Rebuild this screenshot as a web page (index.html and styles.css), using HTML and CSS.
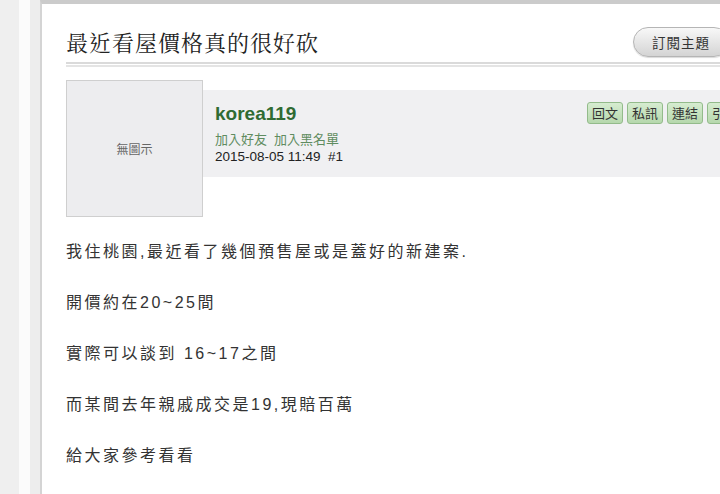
FILE: index.html
```html
<!DOCTYPE html>
<html lang="zh-Hant">
<head>
<meta charset="utf-8">
<title>最近看屋價格真的很好砍</title>
<link rel="stylesheet" href="styles.css">
</head>
<body>
<div class="page">
  <div class="rail rail-a"></div>
  <div class="rail rail-b"></div>
  <div class="rail rail-c"></div>
  <main class="thread">
    <header class="thread-head">
      <h1 class="thread-title">最近看屋價格真的很好砍</h1>
      <button class="subscribe">訂閱主題</button>
    </header>
    <div class="rule"></div>
    <article class="post">
      <div class="post-head">
        <div class="avatar">無圖示</div>
        <div class="meta">
          <div class="author">
            <div class="name">korea119</div>
            <div class="links"><a href="#">加入好友</a><a href="#">加入黑名單</a></div>
            <div class="date">2015-08-05 11:49&nbsp;&nbsp;#1</div>
          </div>
          <div class="actions">
            <a class="act" href="#">回文</a>
            <a class="act" href="#">私訊</a>
            <a class="act" href="#">連結</a>
            <a class="act" href="#">引用</a>
          </div>
        </div>
      </div>
      <div class="post-body">
        <p>我住桃園,最近看了幾個預售屋或是蓋好的新建案.</p>
        <p>開價約在20~25間</p>
        <p>實際可以談到 16~17之間</p>
        <p>而某間去年親戚成交是19,現賠百萬</p>
        <p>給大家參考看看</p>
      </div>
    </article>
  </main>
</div>
</body>
</html>
```

FILE: styles.css
```css
html, body {
  margin: 0;
  padding: 0;
  overflow: hidden;
  background: #ffffff;
}

body {
  font-family: "Liberation Sans", "Noto Sans CJK TC", sans-serif;
  color: #333;
}

.page {
  display: flex;
  width: 775px;
  min-height: 494px;
}

.rail {
  flex: none;
}

.rail-a {
  width: 19px;
  background: #efefef;
}

.rail-b {
  width: 11px;
  background: #fbfbfb;
}

.rail-c {
  width: 10px;
  background: #ededed;
}

.thread {
  flex: 1;
  background: #fff;
  border-left: 2px solid #d4d4d4;
  border-top: 4px solid #cbcbcb;
  padding: 0 24px;
}

.thread-head {
  display: flex;
  align-items: center;
  justify-content: space-between;
  height: 28px;
  margin-top: 24px;
}

.thread-title {
  margin: 0;
  font-family: "Noto Serif CJK TC", "Noto Sans CJK TC", serif;
  font-size: 22px;
  font-weight: normal;
  letter-spacing: 1px;
  line-height: 28px;
  color: #222;
}

.subscribe {
  height: 30px;
  padding: 0 18px;
  margin-right: 22px;
  border: 1px solid #b5b5b5;
  border-radius: 15px;
  background: linear-gradient(#f8f8f8, #d4d4d4);
  font-family: "Noto Sans CJK TC", sans-serif;
  font-size: 13.5px;
  letter-spacing: 1px;
  color: #333;
  box-shadow: 0 1px 1px rgba(0, 0, 0, 0.15);
}

.rule {
  height: 1px;
  margin-top: 6px;
  border-top: 2px solid #dadada;
  border-bottom: 2px solid #e4e4e4;
}

.post {
  margin-top: 13px;
}

.post-head {
  display: flex;
  align-items: flex-start;
}

.avatar {
  flex: none;
  box-sizing: border-box;
  width: 137px;
  height: 137px;
  border: 1px solid #cfcfcf;
  background: #ededef;
  display: flex;
  align-items: center;
  justify-content: center;
  font-family: "Noto Sans CJK TC", sans-serif;
  font-size: 12px;
  color: #666;
}

.meta {
  flex: 1;
  display: flex;
  justify-content: space-between;
  align-items: flex-start;
  height: 87px;
  margin-top: 10px;
  padding: 12px 8px 0 12px;
  box-sizing: border-box;
  background: #f0f0f2;
}

.name {
  margin-top: 1px;
  font-size: 19px;
  font-weight: bold;
  line-height: 22px;
  color: #2f6b33;
}

.links {
  display: flex;
  gap: 7px;
  margin-top: 5px;
  font-family: "Noto Sans CJK TC", sans-serif;
  font-size: 13px;
  line-height: 18px;
}

.links a {
  color: #5f8c60;
  text-decoration: none;
}

.date {
  font-size: 13.5px;
  line-height: 18px;
  color: #222;
}

.actions {
  display: flex;
  gap: 4px;
}

.act {
  box-sizing: border-box;
  width: 36px;
  height: 22px;
  border: 1px solid #93bb8b;
  border-radius: 3px;
  background: linear-gradient(#d6ecd0, #b6d8ad);
  font-family: "Noto Sans CJK TC", sans-serif;
  font-size: 13px;
  line-height: 20px;
  text-align: center;
  color: #333;
  text-decoration: none;
}

.post-body {
  margin-top: 22px;
  font-size: 16px;
  letter-spacing: 2.5px;
  color: #333;
}

.post-body p {
  margin: 0 0 25px;
  line-height: 26px;
}
```
